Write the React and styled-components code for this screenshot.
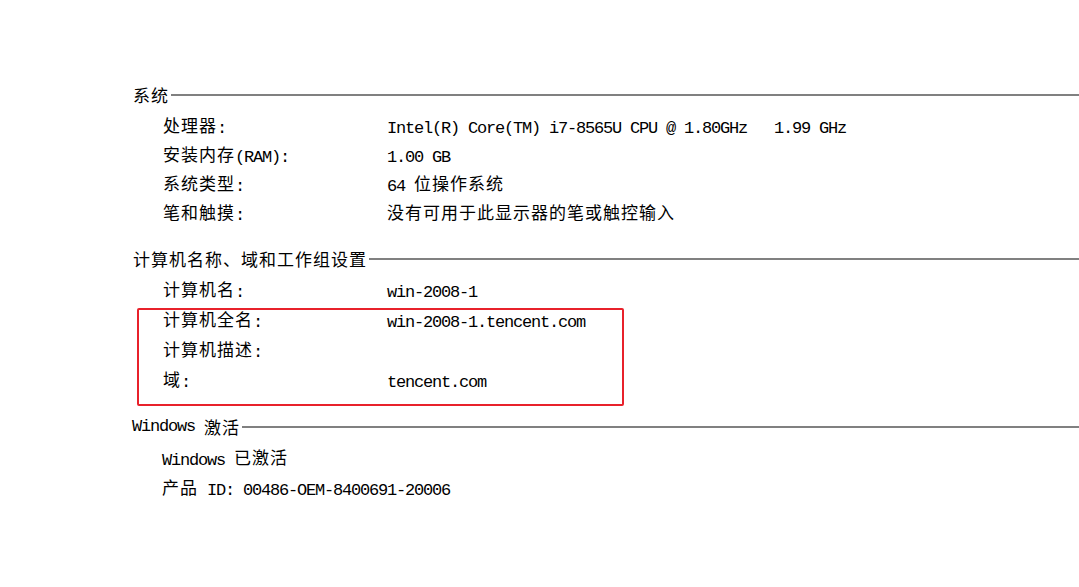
import React from 'react';
import styled, { createGlobalStyle } from 'styled-components';

const Global = createGlobalStyle`
  html, body {
    margin: 0;
    padding: 0;
    background: #fff;
  }
  body {
    font-family: "Liberation Mono", "Noto Sans CJK SC", monospace;
    font-size: 17px;
    letter-spacing: -1.2px;
    color: #000;
  }
`;

const Page = styled.div`
  width: 1079px;
  height: 587px;
  padding: 83px 0 0 132px;
  box-sizing: border-box;
  overflow: hidden;
  display: flex;
  flex-direction: column;
`;

const Section = styled.section`
  position: relative;
  display: flex;
  flex-direction: column;
  gap: 7px;
  margin-bottom: ${p => p.gap || 0}px;
`;

const Header = styled.div`
  display: flex;
  align-items: center;
  height: 24px;
  line-height: 24px;
  padding-left: ${p => p.indent ?? 1}px;
  white-space: pre;
`;

const Rule = styled.div`
  flex: 1;
  height: 2px;
  background: #808080;
  margin-left: 2px;
`;

const Rows = styled.div`
  display: flex;
  flex-direction: column;
  padding-left: ${p => p.indent || 31}px;
`;

const Row = styled.div`
  display: grid;
  grid-template-columns: 224px 1fr;
  align-items: center;
  height: ${p => p.h || 29}px;
  line-height: 20px;
  white-space: pre;
`;

const Han = styled.span`
  font-family: "Noto Sans CJK SC", sans-serif;
  font-size: 17px;
  letter-spacing: 1px;
  line-height: 0;
  vertical-align: 0.05em;
`;

const Highlight = styled.div`
  position: absolute;
  left: 5px;
  top: 61px;
  width: 487px;
  height: 98px;
  box-sizing: border-box;
  border: 2.5px solid #e8212b;
  border-radius: 2px;
  pointer-events: none;
`;

const T = ({ children }) => {
  const parts = String(children).split(/([\u3000-\u303f\u4e00-\u9fff\uff00-\uffef]+)/);
  return parts.map((s, i) =>
    i % 2 ? <Han key={i}>{s}</Han> : s ? <React.Fragment key={i}>{s}</React.Fragment> : null
  );
};

const system = [
  ['处理器:', 'Intel(R) Core(TM) i7-8565U CPU @ 1.80GHz   1.99 GHz'],
  ['安装内存(RAM):', '1.00 GB'],
  ['系统类型:', '64 位操作系统'],
  ['笔和触摸:', '没有可用于此显示器的笔或触控输入'],
];

const computer = [
  ['计算机名:', 'win-2008-1'],
  ['计算机全名:', 'win-2008-1.tencent.com'],
  ['计算机描述:', ''],
  ['域:', 'tencent.com'],
];

export default function App() {
  return (
    <>
      <Global />
      <Page>
        <Section gap={17}>
          <Header><T>系统</T><Rule /></Header>
          <Rows>
            {system.map(([k, v]) => (
              <Row key={k} h={29}>
                <span><T>{k}</T></span>
                <span><T>{v}</T></span>
              </Row>
            ))}
          </Rows>
        </Section>
        <Section gap={17}>
          <Header><T>计算机名称、域和工作组设置</T><Rule /></Header>
          <Rows>
            {computer.map(([k, v]) => (
              <Row key={k} h={30}>
                <span><T>{k}</T></span>
                <span><T>{v}</T></span>
              </Row>
            ))}
          </Rows>
          <Highlight />
        </Section>
        <Section>
          <Header indent={0}><T>Windows 激活</T><Rule /></Header>
          <Rows indent={30}>
            <Row h={30}><span><T>Windows 已激活</T></span></Row>
            <Row h={30}><span><T>产品 ID: 00486-OEM-8400691-20006</T></span></Row>
          </Rows>
        </Section>
      </Page>
    </>
  );
}
